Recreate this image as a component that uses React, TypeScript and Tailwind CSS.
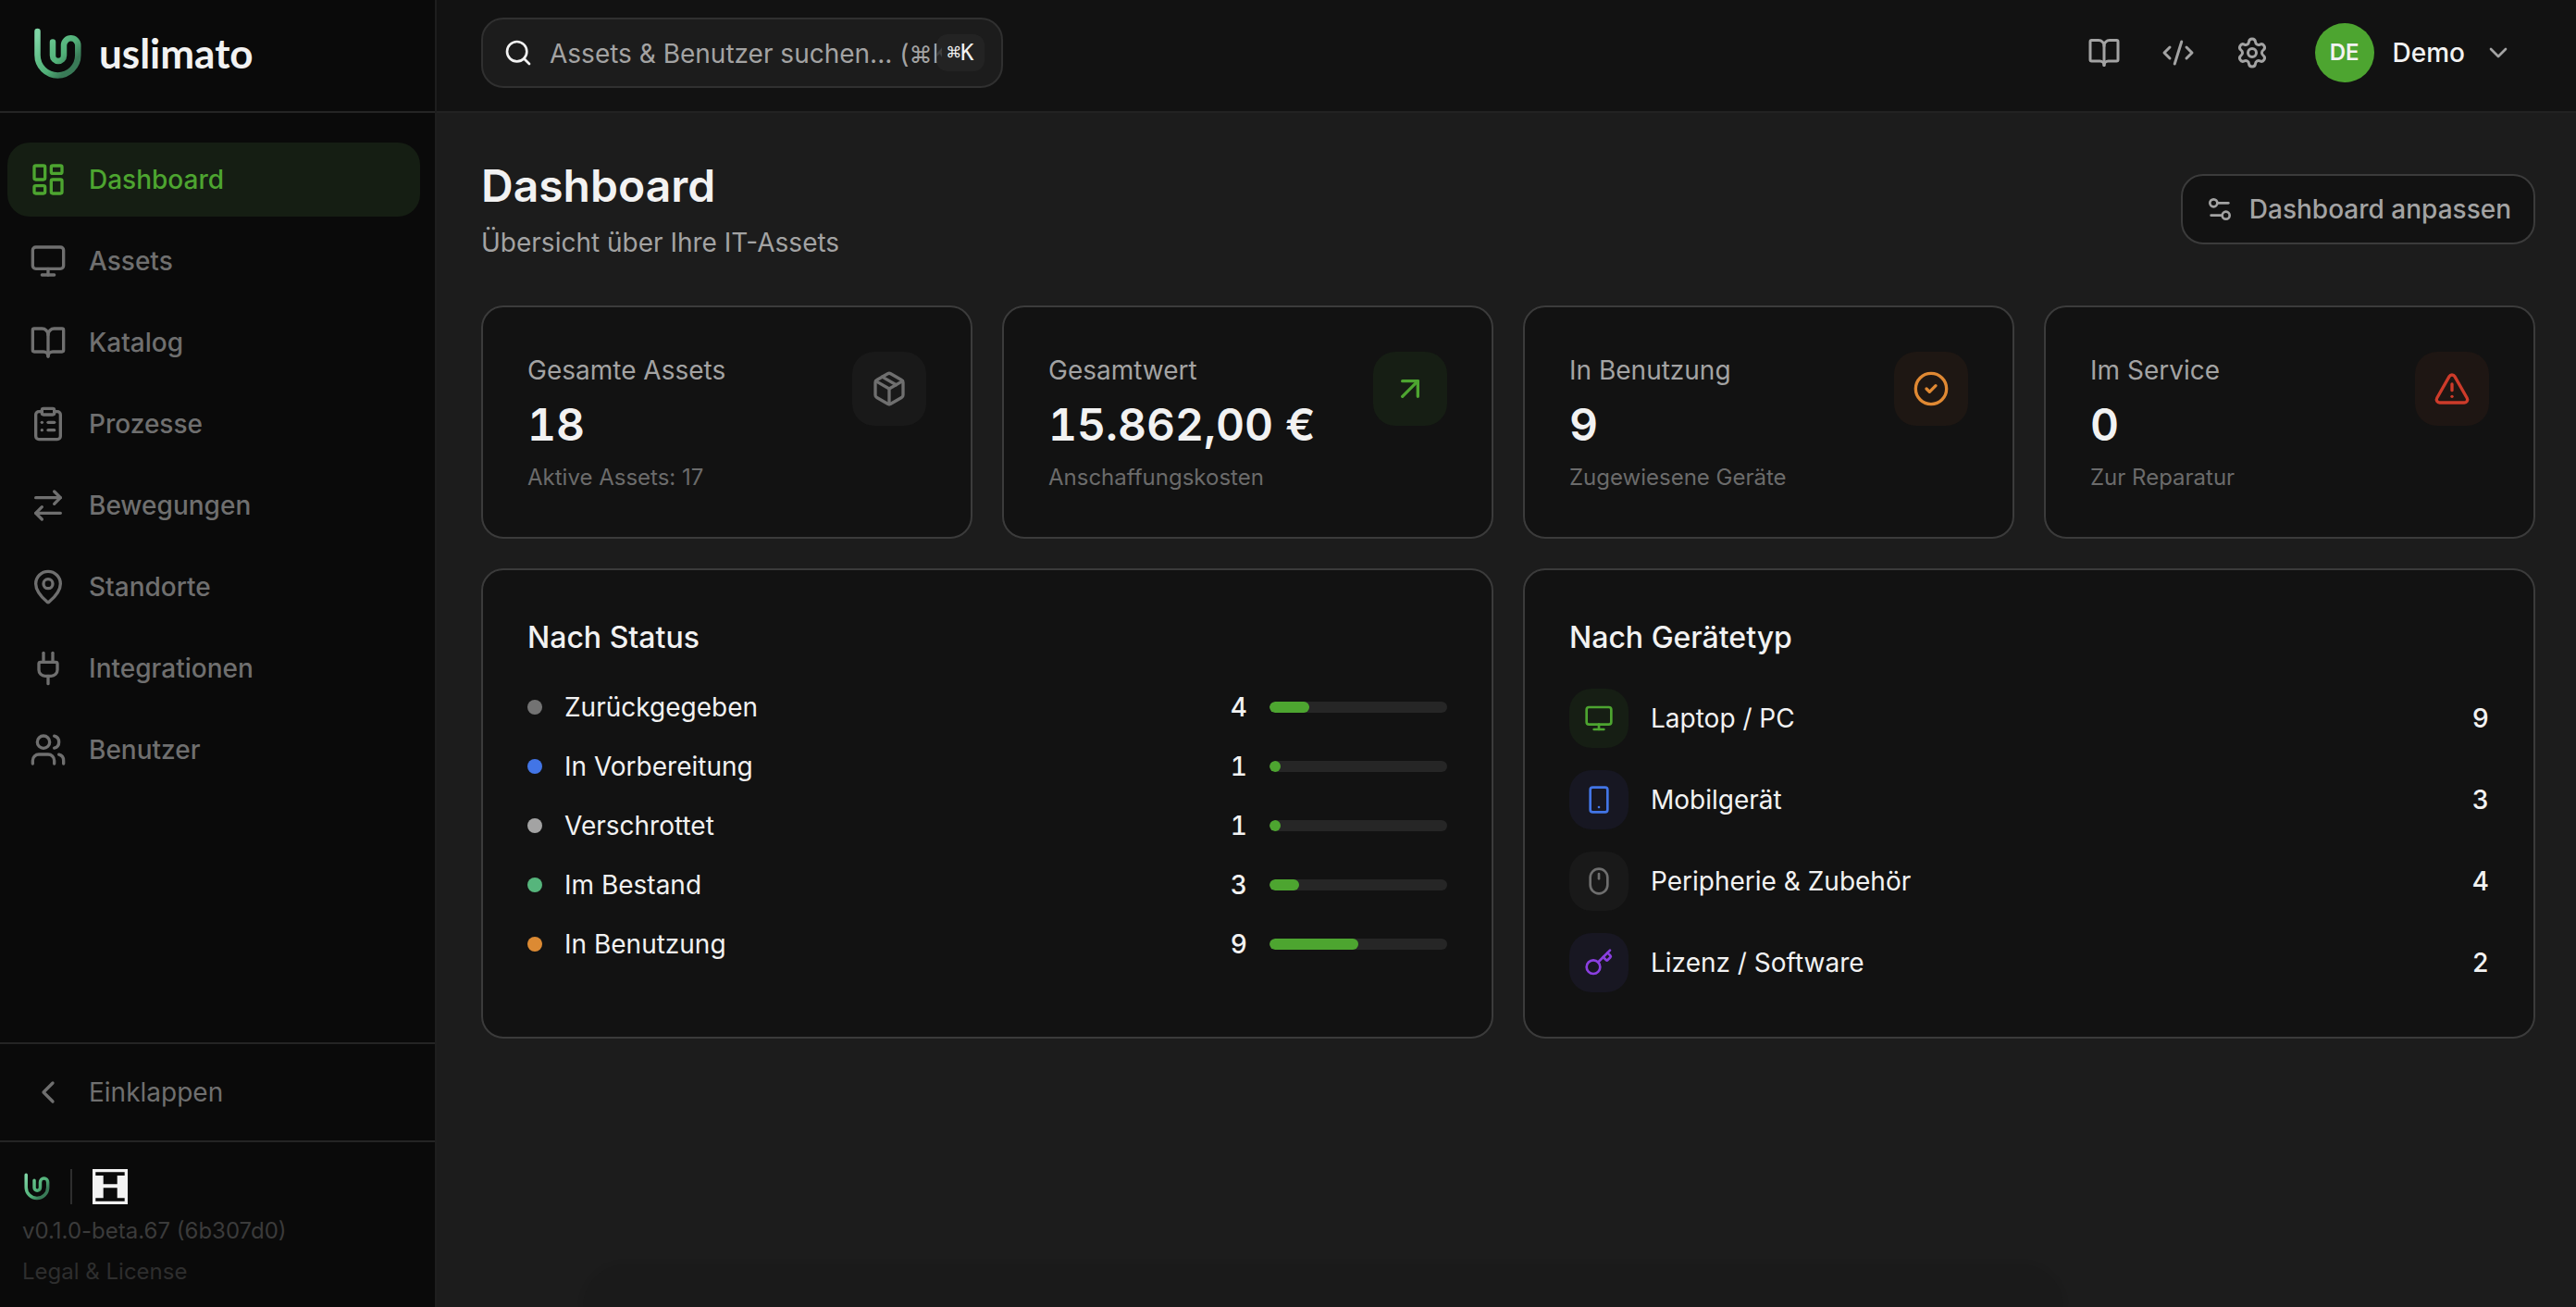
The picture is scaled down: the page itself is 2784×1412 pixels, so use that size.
import { useId } from 'react'
import clsx from 'clsx'
import {
  ArrowRightLeft,
  ArrowUpRight,
  BookOpen,
  ChevronDown,
  ChevronLeft,
  CircleCheck,
  ClipboardList,
  CodeXml,
  Key,
  LayoutDashboard,
  MapPin,
  Monitor,
  Mouse,
  Package,
  Plug,
  Search,
  Settings,
  Settings2,
  Smartphone,
  TriangleAlert,
  Users
} from 'lucide-react'

const navItems = [
  { label: 'Dashboard', icon: LayoutDashboard, active: true },
  { label: 'Assets', icon: Monitor },
  { label: 'Katalog', icon: BookOpen },
  { label: 'Prozesse', icon: ClipboardList },
  { label: 'Bewegungen', icon: ArrowRightLeft },
  { label: 'Standorte', icon: MapPin },
  { label: 'Integrationen', icon: Plug },
  { label: 'Benutzer', icon: Users }
]

const stats = [
  { label: 'Gesamte Assets', value: '18', hint: 'Aktive Assets: 17', icon: Package, tone: 'bg-[#191919] text-[#6f6f6f]' },
  { label: 'Gesamtwert', value: '15.862,00 €', hint: 'Anschaffungskosten', icon: ArrowUpRight, tone: 'bg-[#161e14] text-[#4da530]' },
  { label: 'In Benutzung', value: '9', hint: 'Zugewiesene Geräte', icon: CircleCheck, tone: 'bg-[#1e1713] text-[#e08933]' },
  { label: 'Im Service', value: '0', hint: 'Zur Reparatur', icon: TriangleAlert, tone: 'bg-[#1e1613] text-[#cd3b2a]' }
]

const statuses = [
  { label: 'Zurückgegeben', count: 4, dot: 'bg-[#737373]' },
  { label: 'In Vorbereitung', count: 1, dot: 'bg-[#4275e6]' },
  { label: 'Verschrottet', count: 1, dot: 'bg-[#a3a3a3]' },
  { label: 'Im Bestand', count: 3, dot: 'bg-[#56b57c]' },
  { label: 'In Benutzung', count: 9, dot: 'bg-[#dc8a33]' }
]

const deviceTypes = [
  { label: 'Laptop / PC', count: 9, icon: Monitor, tone: 'bg-[#161e14] text-[#4da530]' },
  { label: 'Mobilgerät', count: 3, icon: Smartphone, tone: 'bg-[#171722] text-[#4275e6]' },
  { label: 'Peripherie & Zubehör', count: 4, icon: Mouse, tone: 'bg-[#191919] text-[#6f6f6f]' },
  { label: 'Lizenz / Software', count: 2, icon: Key, tone: 'bg-[#181722] text-[#8a3fe0]' }
]

const total = statuses.reduce((sum, s) => sum + s.count, 0)

function LogoMark({ className }: { className?: string }) {
  const id = useId()
  return (
    <svg viewBox="0 0 51 56" fill="none" className={className}>
      <defs>
        <linearGradient id={id} x1="4" y1="8" x2="46" y2="46" gradientUnits="userSpaceOnUse">
          <stop offset="0" stopColor="#7fd6a6" />
          <stop offset="0.35" stopColor="#5fbd86" />
          <stop offset="0.6" stopColor="#51b078" />
          <stop offset="0.85" stopColor="#397a57" />
        </linearGradient>
      </defs>
      <path
        d="M3.5 4V29.5a21.9 21.9 0 0 0 43.8 0V19a7.65 7.65 0 0 0-15.3 0V30a6 6 0 0 1-12 0V15.5"
        stroke={`url(#${id})`}
        strokeWidth="6.5"
        strokeLinecap="round"
      />
    </svg>
  )
}

function PartnerMark() {
  return (
    <svg viewBox="0 0 38 38" className="size-[38px]">
      <rect width="38" height="38" fill="#f2f2f2" />
      <path d="M3.3 3.3h31.4V7h-8v9.3h-15V7H3.3zM11.7 20.3h15v11h8v3.4H3.3v-3.4h8.4z" fill="#0a0a0a" />
    </svg>
  )
}

function Sidebar() {
  return (
    <aside className="flex w-[472px] shrink-0 flex-col border-r-2 border-[#1e1e1e] bg-[#0a0a0a]">
      <div className="flex h-[122px] shrink-0 items-start border-b-2 border-[#242424] pt-[30px] pl-[37px]">
        <LogoMark className="h-14 w-[51px]" />
        <span className="ml-[19px] font-['Lato'] text-[44px] leading-[54px] font-bold text-[#f2f2f2]">uslimato</span>
      </div>
      <nav className="flex flex-1 flex-col gap-2 pt-8 pr-4 pl-2">
        {navItems.map(({ label, icon: Icon, active }) => (
          <a
            key={label}
            className={clsx(
              'flex h-20 items-center gap-6 rounded-3xl pl-6 text-[28px] font-medium',
              active ? 'bg-[#151e13] text-[#4da530]' : 'text-[#6f6f6f]'
            )}
          >
            <Icon size={40} />
            {label}
          </a>
        ))}
      </nav>
      <div className="border-t-2 border-[#242424] px-2 py-3">
        <button className="flex h-20 items-center gap-6 pl-6 text-[28px] text-[#6f6f6f]">
          <ChevronLeft size={40} />
          Einklappen
        </button>
      </div>
      <div className="flex h-[180px] flex-col border-t-2 border-[#242424] pt-[29px] pl-6">
        <div className="flex h-[38px] items-center">
          <LogoMark className="ml-[2px] h-[30px] w-[28px]" />
          <span className="ml-[22px] h-[38px] w-[2px] bg-[#2e2e2e]" />
          <span className="ml-[22px]">
            <PartnerMark />
          </span>
        </div>
        <span className="mt-[13px] text-2xl text-[#3b3b3b]">v0.1.0-beta.67 (6b307d0)</span>
        <span className="mt-3 text-2xl text-[#2e2e2e]">Legal &amp; License</span>
      </div>
    </aside>
  )
}

function Header() {
  return (
    <header className="flex h-[122px] shrink-0 items-center border-b-2 border-[#222222] bg-[#121212] pr-[68px] pb-[6px] pl-12">
      <div className="relative flex h-[76px] w-[564px] items-center rounded-3xl border-2 border-[#303030] bg-[#1c1c1c] pr-16 pl-[22px]">
        <Search size={32} className="shrink-0 text-[#f2f2f2]" />
        <span className="ml-[18px] flex-1 overflow-hidden pt-px text-[28px] whitespace-nowrap text-[#a3a3a3]">
          Assets &amp; Benutzer suchen... (<span className="text-[25px]">⌘</span>K)
        </span>
        <kbd className="absolute right-[18px] flex h-10 w-[52px] items-center justify-center rounded-xl bg-[#262626]/80 font-['DejaVu_Sans_Mono',monospace] text-2xl text-[#f2f2f2]">
          ⌘K
        </kbd>
      </div>
      <div className="ml-auto flex items-center">
        <div className="flex gap-11 text-[#a3a3a3]">
          <BookOpen size={36} />
          <CodeXml size={36} />
          <Settings size={36} />
        </div>
        <div className="ml-[50px] flex items-center">
          <span className="flex size-16 items-center justify-center rounded-full bg-[#4da530] text-2xl font-semibold text-[#f2f2f2]">
            DE
          </span>
          <span className="ml-5 text-[28px] font-medium text-[#f2f2f2]">Demo</span>
          <ChevronDown size={32} className="ml-5 text-[#a3a3a3]" />
        </div>
      </div>
    </header>
  )
}

function StatCard({ label, value, hint, icon: Icon, tone }: (typeof stats)[number]) {
  return (
    <div className="flex h-[252px] items-start justify-between rounded-3xl border-2 border-[#3b3b3b] bg-[#121212] p-12">
      <div>
        <div className="text-[28px] leading-10 text-[#a3a3a3]">{label}</div>
        <div className="mt-[9px] text-5xl leading-[60px] font-semibold text-[#f2f2f2] tabular-nums">{value}</div>
        <div className="mt-[11px] text-2xl text-[#6b6b6b]">{hint}</div>
      </div>
      <div className={clsx('flex size-20 items-center justify-center rounded-3xl', tone)}>
        <Icon size={40} />
      </div>
    </div>
  )
}

export default function App() {
  return (
    <div className="relative flex h-[1412px] w-[2784px] overflow-hidden bg-[#1c1c1c] font-['Inter',sans-serif]">
      <Sidebar />
      <div className="flex flex-1 flex-col">
        <Header />
        <main className="flex flex-1 flex-col gap-8 pr-11 pl-12">
          <div className="flex items-start justify-between pt-[50px] pb-[2px]">
            <div>
              <h1 className="-mt-px text-5xl leading-[60px] font-semibold text-[#f2f2f2]">Dashboard</h1>
              <p className="mt-[11px] text-[28px] leading-10 text-[#a3a3a3]">Übersicht über Ihre IT-Assets</p>
            </div>
            <button className="mt-4 flex h-[76px] items-center gap-4 rounded-3xl border-2 border-[#3b3b3b] bg-[#121212] px-6 text-[28px] font-medium text-[#a3a3a3]">
              <Settings2 size={32} />
              Dashboard anpassen
            </button>
          </div>
          <div className="mt-[14px] grid grid-cols-4 gap-8">
            {stats.map((stat) => (
              <StatCard key={stat.label} {...stat} />
            ))}
          </div>
          <div className="grid h-[508px] grid-cols-2 gap-8">
            <section className="rounded-3xl border-2 border-[#3b3b3b] bg-[#121212] p-12 text-[#f2f2f2]">
              <h2 className="mb-[31px] pt-px text-[32px] leading-[48px] font-medium">Nach Status</h2>
              <div className="flex flex-col gap-6">
                {statuses.map(({ label, count, dot }) => (
                  <div key={label} className="flex h-10 items-center">
                    <span className={clsx('size-4 rounded-full', dot)} />
                    <span className="ml-6 flex-1 text-[28px]">{label}</span>
                    <span className="text-[28px] font-medium tabular-nums">{count}</span>
                    <span className="ml-6 h-3 w-48 overflow-hidden rounded-full bg-[#262626]">
                      <span
                        className="block h-full min-w-3 rounded-full bg-[#4da530]"
                        style={{ width: `${(count / total) * 100}%` }}
                      />
                    </span>
                  </div>
                ))}
              </div>
            </section>
            <section className="rounded-3xl border-2 border-[#3b3b3b] bg-[#121212] p-12 text-[#f2f2f2]">
              <h2 className="mb-[31px] pt-px text-[32px] leading-[48px] font-medium">Nach Gerätetyp</h2>
              <div className="flex flex-col gap-6">
                {deviceTypes.map(({ label, count, icon: Icon, tone }) => (
                  <div key={label} className="flex h-16 items-center">
                    <span className={clsx('flex size-16 items-center justify-center rounded-3xl', tone)}>
                      <Icon size={32} />
                    </span>
                    <span className="ml-6 flex-1 text-[28px]">{label}</span>
                    <span className="text-[28px] font-medium tabular-nums">{count}</span>
                  </div>
                ))}
              </div>
            </section>
          </div>
        </main>
      </div>
      {/* soft shade at the lower edge */}
      <div className="absolute bottom-0 left-[630px] h-[46px] w-[1600px] rounded-t-[60px] bg-black/6 shadow-[0_0_8px_rgba(0,0,0,0.06)]" />
    </div>
  )
}
